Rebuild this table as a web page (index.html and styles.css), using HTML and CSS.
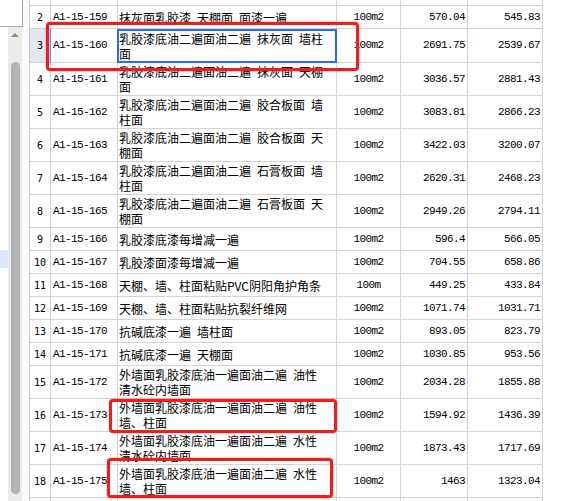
FILE: index.html
```html
<!DOCTYPE html>
<html lang="zh-CN">
<head>
<meta charset="utf-8">
<title>定额列表</title>
<link rel="stylesheet" href="styles.css">
</head>
<body>
<div class="app">
  <aside class="side">
    <div class="side-box"></div>
    <div class="side-body">
      <div class="strip"><div class="hl"></div></div>
      <div class="track"><span class="arrow"></span><span class="thumb"></span></div>
    </div>
  </aside>
  <main class="sheet">
    <div class="row top"><div></div><div></div><div></div><div></div><div></div><div></div></div>
    <div class="row"><div class="n">2</div><div class="c">A1-15-159</div><div class="d"><span>抹灰面乳胶漆 天棚面 面漆一遍</span></div><div class="u">100m2</div><div class="v">570.04</div><div class="v">545.83</div></div>
    <div class="row tall first"><div class="n cur">3</div><div class="c">A1-15-160</div><div class="d sel"><span>乳胶漆底油二遍面油二遍 抹灰面 墙柱<br>面</span></div><div class="u">100m2</div><div class="v">2691.75</div><div class="v">2539.67</div></div>
    <div class="row tall"><div class="n">4</div><div class="c">A1-15-161</div><div class="d"><span>乳胶漆底油二遍面油二遍 抹灰面 天棚<br>面</span></div><div class="u">100m2</div><div class="v">3036.57</div><div class="v">2881.43</div></div>
    <div class="row tall"><div class="n">5</div><div class="c">A1-15-162</div><div class="d"><span>乳胶漆底油二遍面油二遍 胶合板面 墙<br>柱面</span></div><div class="u">100m2</div><div class="v">3083.81</div><div class="v">2866.23</div></div>
    <div class="row tall"><div class="n">6</div><div class="c">A1-15-163</div><div class="d"><span>乳胶漆底油二遍面油二遍 胶合板面 天<br>棚面</span></div><div class="u">100m2</div><div class="v">3422.03</div><div class="v">3200.07</div></div>
    <div class="row tall"><div class="n">7</div><div class="c">A1-15-164</div><div class="d"><span>乳胶漆底油二遍面油二遍 石膏板面 墙<br>柱面</span></div><div class="u">100m2</div><div class="v">2620.31</div><div class="v">2468.23</div></div>
    <div class="row tall"><div class="n">8</div><div class="c">A1-15-165</div><div class="d"><span>乳胶漆底油二遍面油二遍 石膏板面 天<br>棚面</span></div><div class="u">100m2</div><div class="v">2949.26</div><div class="v">2794.11</div></div>
    <div class="row"><div class="n">9</div><div class="c">A1-15-166</div><div class="d"><span>乳胶漆底漆每增减一遍</span></div><div class="u">100m2</div><div class="v">596.4</div><div class="v">566.05</div></div>
    <div class="row"><div class="n">10</div><div class="c">A1-15-167</div><div class="d"><span>乳胶漆面漆每增减一遍</span></div><div class="u">100m2</div><div class="v">704.55</div><div class="v">658.86</div></div>
    <div class="row"><div class="n">11</div><div class="c">A1-15-168</div><div class="d"><span>天棚、墙、柱面粘贴PVC阴阳角护角条</span></div><div class="u">100m</div><div class="v">449.25</div><div class="v">433.84</div></div>
    <div class="row"><div class="n">12</div><div class="c">A1-15-169</div><div class="d"><span>天棚、墙、柱面粘贴抗裂纤维网</span></div><div class="u">100m2</div><div class="v">1071.74</div><div class="v">1031.71</div></div>
    <div class="row"><div class="n">13</div><div class="c">A1-15-170</div><div class="d"><span>抗碱底漆一遍 墙柱面</span></div><div class="u">100m2</div><div class="v">893.05</div><div class="v">823.79</div></div>
    <div class="row"><div class="n">14</div><div class="c">A1-15-171</div><div class="d"><span>抗碱底漆一遍 天棚面</span></div><div class="u">100m2</div><div class="v">1030.85</div><div class="v">953.56</div></div>
    <div class="row tall"><div class="n">15</div><div class="c">A1-15-172</div><div class="d"><span>外墙面乳胶漆底油一遍面油二遍 油性<br>清水砼内墙面</span></div><div class="u">100m2</div><div class="v">2034.28</div><div class="v">1855.88</div></div>
    <div class="row tall"><div class="n">16</div><div class="c">A1-15-173</div><div class="d"><span>外墙面乳胶漆底油一遍面油二遍 油性<br>墙、柱面</span></div><div class="u">100m2</div><div class="v">1594.92</div><div class="v">1436.39</div></div>
    <div class="row tall"><div class="n">17</div><div class="c">A1-15-174</div><div class="d"><span>外墙面乳胶漆底油一遍面油二遍 水性<br>清水砼内墙面</span></div><div class="u">100m2</div><div class="v">1873.43</div><div class="v">1717.69</div></div>
    <div class="row tall"><div class="n">18</div><div class="c">A1-15-175</div><div class="d"><span>外墙面乳胶漆底油一遍面油二遍 水性<br>墙、柱面</span></div><div class="u">100m2</div><div class="v">1463</div><div class="v">1323.04</div></div>
    <div class="row tall"><div class="n">19</div><div class="c">A1-15-176</div><div class="d"><span>外墙面乳胶漆底油一遍面油二遍 弹性<br>墙、柱面</span></div><div class="u">100m2</div><div class="v">1512.36</div><div class="v">1374.50</div></div>
  </main>
  <div class="mark m1"></div>
  <div class="mark m2"></div>
  <div class="mark m3"></div>
</div>
</body>
</html>
```
FILE: styles.css
```css
html, body {
  margin: 0;
  padding: 0;
  background: #fff;
}

.app {
  position: relative;
  display: flex;
  width: 588px;
  height: 501px;
  overflow: hidden;
  background: #fff;
  color: #000;
  font-family: "Noto Sans CJK SC", sans-serif;
  font-size: 12px;
}

/* left panel */
.side {
  flex: none;
  width: 29px;
  display: flex;
  flex-direction: column;
  background: #fbfbfb;
}

.side-box {
  width: 23px;
  height: 27px;
  box-sizing: border-box;
  border-right: 1px solid #a9a9a9;
  border-bottom: 1px solid #a9a9a9;
  background: #fff;
}

.side-body {
  flex: 1;
  display: flex;
}

.strip {
  width: 8px;
  padding-top: 223px;
  background: #fff;
}

.hl {
  height: 18px;
  background: #dde8fa;
}

.track {
  width: 14px;
  background: #ebebeb;
  display: flex;
  flex-direction: column;
  align-items: center;
  padding-top: 6px;
}

.arrow {
  width: 0;
  height: 0;
  border-left: 4px solid transparent;
  border-right: 4px solid transparent;
  border-bottom: 4px solid #8c8c8c;
}

.thumb {
  margin-top: 25px;
  width: 9px;
  height: 432px;
  border-radius: 5px;
  background: #b1b4b8;
}

/* sheet */
.sheet {
  flex: none;
  width: 513px;
  border-left: 1px solid #c9c9c9;
}

.row {
  display: grid;
  grid-template-columns: 21px 67px 219px 64px 67px 75px;
  height: 23px;
}

.row.top { height: 6px; }
.row.tall { height: 33px; }
.row.first { height: 34px; }

.row > div {
  box-sizing: border-box;
  display: flex;
  align-items: center;
  border-right: 1px solid #d4d4d4;
  border-bottom: 1px solid #d4d4d4;
  line-height: 15px;
  overflow: hidden;
  white-space: nowrap;
}

.n, .c, .u, .v {
  font-family: "Liberation Mono", monospace;
  font-size: 11px;
  letter-spacing: -0.6px;
}

.n {
  justify-content: center;
  font-family: "DejaVu Sans Mono", monospace;
  font-size: 10px;
  letter-spacing: 0;
  overflow: visible !important;
}
.n.cur {
  background: #e2e8f3;
  border-right-color: #4d90ee !important;
}

.c { padding-left: 2px; }
.u { justify-content: center; }
.v { justify-content: flex-end; padding-right: 2px; }

.d {
  padding-left: 1px;
  word-spacing: 3.3px;
}

.sel { position: relative; overflow: visible !important; }
.sel::after {
  content: "";
  position: absolute;
  left: -1px;
  top: 0;
  right: -1px;
  bottom: -1px;
  border: 2px solid #1f6cff;
}

/* annotation marks */
.mark {
  position: absolute;
  box-sizing: border-box;
  border: 3px solid #f21c1c;
  border-radius: 4px;
  box-shadow: 0 0 2px rgba(255, 40, 40, 0.6);
}

.m1 { left: 46px; top: 22px; width: 313px; height: 49px; }
.m2 { left: 109px; top: 399px; width: 228px; height: 34px; }
.m3 { left: 107px; top: 458px; width: 226px; height: 40px; }
```
